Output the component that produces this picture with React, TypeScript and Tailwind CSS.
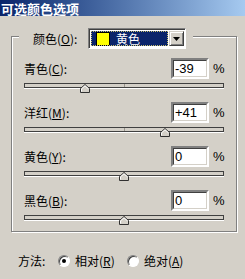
import React from 'react';

const cjk = "font-['Noto_Sans_CJK_SC',sans-serif]";

type Channel = { name: string; key: string; value: number };

function Slider({ value }: { value: number }) {
  // range -100..100 over a 200px track
  const left = value + 100 - 5;
  return (
    <div className="relative h-[10px] w-[200px] ml-[12px] mt-[4px]">
      <div className="mt-[4px] h-[5px] bg-[#d4d0c8] border border-[#404040] shadow-[0_1px_0_#fff]">
        <div className="ml-[99px] w-px h-full bg-[#9a968e]" />
      </div>
      <svg className="absolute top-[1px]" style={{ left }} width="10" height="9" viewBox="0 0 10 9">
        <polygon points="0.5,8.5 0.5,4.5 5,0.5 9.5,4.5 9.5,8.5" fill="#d4d0c8" stroke="#303030" />
        <polyline points="1.5,7.5 1.5,4.9 5,1.8 8.5,4.9" fill="none" stroke="#ffffff" />
      </svg>
    </div>
  );
}

function Row({ ch, first }: { ch: Channel; first?: boolean }) {
  const text = ch.value > 0 ? `+${ch.value}` : `${ch.value}`;
  return (
    <div className={first ? 'mt-[9px]' : 'mt-[9px]'}>
      <div className="flex items-center h-[21px]">
        <span className={`${cjk} text-[12px] leading-none text-black ml-[12px] w-[147px]`}>
          {ch.name}(<span className="underline">{ch.key}</span>):
        </span>
        <div className="w-[38px] h-[21px] bg-white border-2 border-t-[#808080] border-l-[#808080] border-b-white border-r-white">
          <div className="h-full border border-t-[#404040] border-l-[#404040] border-b-[#d4d0c8] border-r-[#d4d0c8] flex items-center pl-[1px] font-['Liberation_Sans',sans-serif] text-[13px] leading-none text-black">
            {text}
          </div>
        </div>
        <span className="ml-[4px] font-['Liberation_Sans',sans-serif] text-[13px] leading-none text-black">%</span>
      </div>
      <Slider value={ch.value} />
    </div>
  );
}

function Radio({ checked }: { checked?: boolean }) {
  return (
    <div className="w-[12px] h-[12px] rounded-full bg-white border border-t-[#808080] border-l-[#808080] border-b-white border-r-white shadow-[inset_1px_1px_0_#404040] flex items-center justify-center">
      {checked && <div className="w-[4px] h-[4px] rounded-full bg-black" />}
    </div>
  );
}

export default function App() {
  const channels: Channel[] = [
    { name: '青色', key: 'C', value: -39 },
    { name: '洋红', key: 'M', value: 41 },
    { name: '黄色', key: 'Y', value: 0 },
    { name: '黑色', key: 'B', value: 0 },
  ];

  return (
    <div className={`w-[245px] h-[279px] bg-[#d4d0c8] overflow-hidden ${cjk}`}>
      <div className="h-[16px] flex items-center pl-[1px] bg-linear-to-r from-[#0a246a] to-[#a6caf0]">
        <span className="text-white font-bold text-[13px] leading-none">可选颜色选项</span>
      </div>

      <div className="mt-[20px] ml-[11px] w-[226px] border border-[#808080] shadow-[inset_1px_1px_0_#fff,1px_1px_0_#fff] pb-[6px]">
        <div className="-mt-[9px] ml-[7px] w-fit flex items-center h-[21px] bg-[#d4d0c8] pl-[14px] pr-[7px]">
          <span className="text-[12px] leading-none text-black w-[55px]">
            颜色(<span className="underline">O</span>):
          </span>
          <div className="w-[98px] h-[21px] bg-white border border-t-[#808080] border-l-[#808080] border-b-white border-r-white shadow-[inset_1px_1px_0_#404040] flex p-[2px] pr-[1px]">
            <div className="flex-1 bg-[#0a246a] outline outline-dotted outline-[#c8c070] -outline-offset-1 flex items-center pl-[5px]">
              <div className="w-[14px] h-[14px] bg-[#ffff00] border border-black" />
              <span className="ml-[6px] text-white text-[12px] leading-none">黄色</span>
            </div>
            <div className="w-[15px] ml-[1px] bg-[#d4d0c8] border border-t-[#d4d0c8] border-l-[#d4d0c8] border-b-[#404040] border-r-[#404040] shadow-[inset_1px_1px_0_#fff,inset_-1px_-1px_0_#808080] flex items-center justify-center">
              <svg width="7" height="4" viewBox="0 0 7 4">
                <polygon points="0,0 7,0 3.5,4" fill="#000" />
              </svg>
            </div>
          </div>
        </div>

        {channels.map((ch, i) => (
          <Row key={ch.key} ch={ch} first={i === 0} />
        ))}
      </div>

      <div className="mt-[21px] h-[16px] flex items-center text-[12px] leading-none text-black">
        <span className="ml-[18px] w-[40px]">方法:</span>
        <Radio checked />
        <span className="ml-[5px] w-[52px]">
          相对(<span className="underline">R</span>)
        </span>
        <Radio />
        <span className="ml-[5px]">
          绝对(<span className="underline">A</span>)
        </span>
      </div>
    </div>
  );
}
